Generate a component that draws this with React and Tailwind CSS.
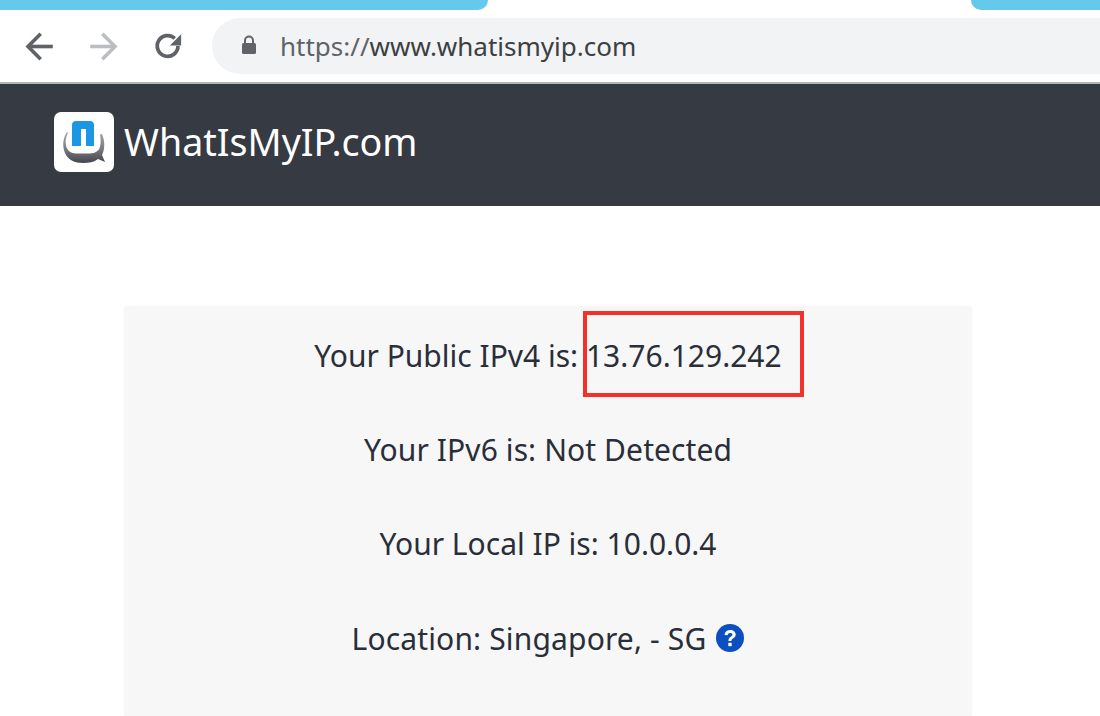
import React from "react";

function Back({ className }) {
  return (
    <svg viewBox="0 0 24 24" className={className} fill="none" stroke="currentColor" strokeWidth="3">
      <path d="M23 12H3.500" />
      <path d="M13 1.500 2.500 12 13 22.500" />
    </svg>
  );
}

function Logo() {
  return (
    <div className="w-[60px] h-[60px] rounded-[7px] bg-white flex items-center justify-center">
      <svg viewBox="0 0 60 60" className="w-[60px] h-[60px]">
        <defs>
          <linearGradient id="bowl" x1="0" y1="0" x2="0" y2="1">
            <stop offset="0" stopColor="#a5a6ab" />
            <stop offset="0.55" stopColor="#7a7b82" />
            <stop offset="1" stopColor="#44454c" />
          </linearGradient>
        </defs>
        <path d="M13 20C9 26 8 34 11 41c3 7 10 10 18 10 6 0 11-1 15-4l7 3-3-7c3-6 3-14 0-21l-2 .5c1 6 1 11-1 15-3 3-6 4-10 4H22c-5 0-9-3-10-8-1-4 0-9 2-13z" fill="url(#bowl)" />
        <path d="M18 34V13c0-2.500 1.500-4 4-4h14c2.500 0 4 1.500 4 4v21h-8V17h-5v17z" fill="#1c97e4" />
      </svg>
    </div>
  );
}

function Row({ children, className = "" }) {
  return <div className={`flex items-center justify-center whitespace-pre ${className}`}>{children}</div>;
}

export default function App() {
  return (
    <div className="w-[1100px] h-[716px] overflow-hidden bg-white font-['Noto_Sans','Open_Sans',sans-serif]">
      <div className="h-[10px] flex justify-between">
        <div className="w-[488px] h-[10px] bg-[#65c9ec] rounded-br-[12px]" />
        <div className="w-[129px] h-[10px] bg-[#65c9ec] rounded-bl-[12px]" />
      </div>
      <div className="h-[72px] flex items-center pl-[25px] border-b-2 border-[#b4b5b9] box-content">
        <Back className="w-[29px] h-[29px] text-[#5f6368]" />
        <Back className="w-[29px] h-[29px] ml-[35px] text-[#bcbdc0] rotate-180" />
        <svg viewBox="0 0 24 24" className="w-[30px] h-[30px] ml-[35px] text-[#5f6368]" fill="none">
          <path d="M20 12a8.300 8.300 0 1 1-2.600-6.100" stroke="currentColor" strokeWidth="3" />
          <path d="M22.500 2.500v9h-9z" fill="currentColor" />
        </svg>
        <div className="ml-[29px] flex-1 h-[56px] rounded-l-[28px] bg-[#f1f3f4] flex items-center pl-[29px]">
          <svg viewBox="0 0 16 20" className="w-[16px] h-[20px] text-[#5f6368] mb-[3px]">
            <path d="M4 8V5.500a4 4 0 0 1 8 0V8" fill="none" stroke="currentColor" strokeWidth="2" />
            <rect x="1" y="8" width="14" height="11" rx="1.500" fill="currentColor" />
          </svg>
          <span className="ml-[23px] text-[26px] text-[#3c4043]"><span className="text-[#5f6368]">https://</span>www.whatismyip.com</span>
        </div>
      </div>
      <header className="h-[122px] bg-[#353a43] flex items-center pl-[54px] pb-[6px]">
        <Logo />
        <span className="ml-[10px] text-white text-[37.6px]">WhatIsMyIP.com</span>
      </header>
      <main className="mt-[100px] ml-[124px] w-[848px] h-[410px] bg-[#f7f7f8] rounded-t-[3px] text-[30px] text-[#2a2e38] pt-[2px] shadow-[0_0_4px_rgba(0,0,0,0.02)]">
        <Row className="h-[94px]">
          <span>Your Public IPv4 is: </span>
          <span className="relative">
            13.76.129.242
            <span className="absolute left-[-3px] top-[-22px] w-[221px] h-[86px] border-[4px] border-[#f4302a]" />
          </span>
        </Row>
        <Row className="h-[94px] tracking-[0.1px]">Your IPv6 is: Not Detected</Row>
        <Row className="h-[94px]">Your Local IP is: 10.0.0.4</Row>
        <Row className="h-[94px] pt-[2px] tracking-[0.15px]">
          Location: Singapore, - SG
          <svg viewBox="0 0 28 28" className="w-[28px] h-[28px] ml-[10px]">
            <circle cx="14" cy="14" r="14" fill="#0b4fc0" />
            <path d="M8.500 11c.3-3.200 2.700-5 5.700-5 3.100 0 5.500 1.800 5.500 4.600 0 3.700-4.300 3.700-4.300 6.400h-3c-.2-4.300 4-4.300 4-6.300 0-1-.9-1.700-2.200-1.700-1.400 0-2.300.8-2.600 2.300z" fill="#fff" />
            <rect x="12.300" y="18.800" width="3.400" height="3.400" rx=".6" fill="#fff" />
          </svg>
        </Row>
      </main>
    </div>
  );
}
